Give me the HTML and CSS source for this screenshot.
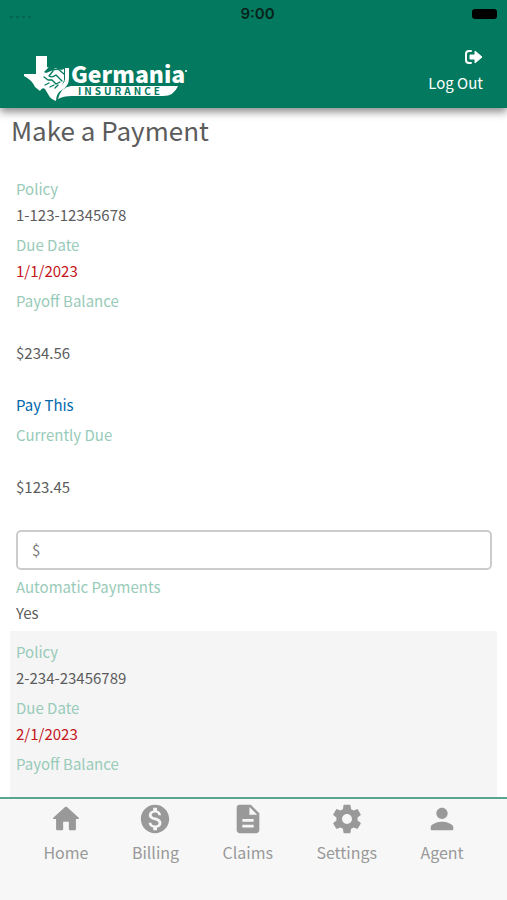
FILE: index.html
```html
<!DOCTYPE html>
<html lang="en">
<head>
  <meta charset="UTF-8">
  <meta name="viewport" content="width=device-width, initial-scale=1">
  <title>Make a Payment</title>
  <link rel="stylesheet" href="styles.css">
</head>
<body>

  <header class="header">
    <div class="status-bar">
      <span class="signal"><i></i><i></i><i></i><i></i></span>
      <span class="time">9:00</span>
      <span class="battery"></span>
    </div>
    <div class="header-row">
      <svg class="logo" viewBox="0 0 164 48" role="img" aria-label="Germania Insurance">
        <!-- Texas -->
        <path fill="#fff" d="M12 0H23V11L27 13L32 12L37 14L40 13V24Q39 29 34 33Q30 38 32 45Q26 43 24 38L21 33Q18 31 16 35L11 31Q8 24 0 20V18H12Z"/>
        <!-- handshake -->
        <path fill="#037a5f" d="M20 16L24 12L31 12L27 15L22 17Z"/>
        <g fill="none" stroke="#037a5f" stroke-width="1.3" stroke-linecap="round" stroke-linejoin="round">
          <path d="M28 14L34 13L40 18"/>
          <path d="M29 15L25 20Q28 22 32 19L38 25"/>
          <path d="M20 21L24 24L28 24L32 28L36 26"/>
          <path d="M21 29L25 27M26 31L30 29M31 32L34 29"/>
        </g>
        <path fill="#fff" d="M41 12H45V22Q45 30 38 34Q32 37 32 45L29 40Q31 33 36 30Q42 27 41 20Z"/>
        <!-- banner -->
        <path fill="#fff" d="M34 43Q37 31 47 30H154Q150 40 139 40H48Q39 40 34 43Z"/>
        <text class="logo-name" x="47" y="27">Germania</text>
        <text class="logo-sub" x="54" y="39">INSURANCE</text>
        <circle cx="162" cy="15" r="1" fill="#fff"/>
      </svg>
      <button class="logout" type="button">
        <svg class="logout-icon" viewBox="0 0 18 14">
          <path d="M6 1H4Q1 1 1 4V10Q1 13 4 13H6" fill="none" stroke="#fff" stroke-width="2" stroke-linecap="round"/>
          <path d="M5 5H10V1L17 7L10 13V9H5Z" fill="#fff" stroke="#fff" stroke-width="1" stroke-linejoin="round"/>
        </svg>
        Log Out
      </button>
    </div>
  </header>

  <main class="content">
    <h1>Make a Payment</h1>

    <section class="policy">
      <dl>
        <dt>Policy</dt>
        <dd>1-123-12345678</dd>
        <dt>Due Date</dt>
        <dd class="due">1/1/2023</dd>
        <dt>Payoff Balance</dt>
        <dd class="amount">$234.56</dd>
        <dd><a href="#">Pay This</a></dd>
        <dt><label for="pay1">Currently Due</label></dt>
        <dd class="amount">$123.45</dd>
        <dd><input type="text" id="pay1" value="$"></dd>
        <dt>Automatic Payments</dt>
        <dd>Yes</dd>
      </dl>
    </section>

    <section class="policy shaded">
      <dl>
        <dt>Policy</dt>
        <dd>2-234-23456789</dd>
        <dt>Due Date</dt>
        <dd class="due">2/1/2023</dd>
        <dt>Payoff Balance</dt>
      </dl>
    </section>
  </main>

  <nav class="tabs">
    <a href="#">
      <svg viewBox="0 0 24 24"><path d="M10 19v-5h4v5c0 .55.45 1 1 1h3c.55 0 1-.45 1-1v-7h1.700c.46 0 .68-.57.33-.87L12.670 3.600c-.38-.34-.96-.34-1.340 0l-8.360 7.530c-.34.3-.13.87.33.87H5v7c0 .55.45 1 1 1h3c.55 0 1-.45 1-1z"/></svg>
      Home
    </a>
    <a href="#">
      <svg viewBox="0 0 24 24"><path d="M12 2C6.480 2 2 6.480 2 12s4.480 10 10 10 10-4.480 10-10S17.520 2 12 2zm1.410 16.090V20h-2.670v-1.930c-1.710-.36-3.160-1.460-3.270-3.400h1.960c.1 1.050.82 1.870 2.650 1.870 1.960 0 2.400-.98 2.400-1.590 0-.83-.44-1.610-2.670-2.140-2.480-.6-4.180-1.620-4.180-3.670 0-1.720 1.390-2.840 3.110-3.210V4h2.670v1.950c1.860.45 2.790 1.860 2.850 3.390H14.300c-.05-1.110-.64-1.870-2.220-1.870-1.500 0-2.400.68-2.400 1.640 0 .84.65 1.390 2.670 1.910s4.180 1.390 4.180 3.910c-.01 1.830-1.380 2.830-3.120 3.160z"/></svg>
      Billing
    </a>
    <a href="#">
      <svg viewBox="0 0 24 24"><path d="M14 2H6c-1.100 0-1.990.9-1.990 2L4 20c0 1.100.89 2 1.990 2H18c1.100 0 2-.9 2-2V8l-6-6zm2 16H8v-2h8v2zm0-4H8v-2h8v2zm-3-5V3.500L18.500 9H13z"/></svg>
      Claims
    </a>
    <a href="#">
      <svg viewBox="0 0 24 24"><path d="M19.430 12.980c.04-.32.07-.64.07-.98s-.03-.66-.07-.98l2.110-1.650c.19-.15.24-.42.12-.64l-2-3.460c-.12-.22-.39-.3-.61-.22l-2.490 1c-.52-.4-1.080-.73-1.690-.98l-.38-2.650C14.460 2.180 14.250 2 14 2h-4c-.25 0-.46.18-.49.42l-.38 2.650c-.61.25-1.170.59-1.690.98l-2.490-1c-.23-.09-.49 0-.61.22l-2 3.460c-.13.22-.07.49.12.64l2.110 1.650c-.04.32-.07.65-.07.98s.03.66.07.98l-2.110 1.650c-.19.15-.24.42-.12.64l2 3.460c.12.22.39.3.61.22l2.490-1c.52.4 1.080.73 1.690.98l.38 2.650c.03.24.24.42.49.42h4c.25 0 .46-.18.49-.42l.38-2.650c.61-.25 1.170-.59 1.690-.98l2.490 1c.23.09.49 0 .61-.22l2-3.460c.12-.22.07-.49-.12-.64l-2.110-1.650zM12 15.500c-1.930 0-3.500-1.570-3.500-3.500s1.570-3.500 3.500-3.500 3.500 1.570 3.500 3.500-1.570 3.500-3.500 3.500z"/></svg>
      Settings
    </a>
    <a href="#">
      <svg viewBox="0 0 24 24"><path d="M12 12c2.210 0 4-1.790 4-4s-1.790-4-4-4-4 1.790-4 4 1.790 4 4 4zm0 2c-2.670 0-8 1.340-8 4v1c0 .55.45 1 1 1h14c.55 0 1-.45 1-1v-1c0-2.660-5.330-4-8-4z"/></svg>
      Agent
    </a>
  </nav>

</body>
</html>
```
FILE: styles.css
```css
* {
  box-sizing: border-box;
}

body {
  margin: 0;
  height: 100vh;
  display: flex;
  flex-direction: column;
  font-family: "Noto Sans CJK SC", "Noto Sans", sans-serif;
  font-size: 15px;
  line-height: 26px;
  color: #5c5c5c;
  background-color: #fff;
}

/* header */
.header {
  flex: none;
  position: relative;
  background-color: #037a5f;
  color: #fff;
  box-shadow: 0 4px 8px rgba(0, 0, 0, 0.45);
}

.status-bar {
  display: grid;
  grid-template-columns: 1fr auto 1fr;
  align-items: center;
  height: 28px;
  padding: 0 10px;
  color: #06231b;
}

.signal {
  display: flex;
  gap: 3px;
  padding-top: 6px;
}

.signal i {
  width: 3px;
  height: 2px;
  background-color: #04664f;
}

.time {
  padding-left: 8px;
  font-family: Inter, sans-serif;
  font-size: 15px;
  font-weight: 600;
}

.battery {
  justify-self: end;
  width: 25px;
  height: 10px;
  border-radius: 3px;
  background-color: #000;
}

.header-row {
  display: flex;
  justify-content: space-between;
  align-items: flex-end;
  height: 80px;
  padding: 0 24px 4px;
}

.logo {
  width: 164px;
  height: 48px;
  overflow: visible;
}

.logo-name {
  font-size: 23px;
  font-weight: 900;
  fill: #fff;
}

.logo-sub {
  font-size: 10px;
  font-weight: 700;
  letter-spacing: 3px;
  fill: #037a5f;
}

.logout {
  display: flex;
  flex-direction: column;
  align-items: flex-end;
  gap: 6px;
  padding: 0 0 8px;
  border: none;
  background: none;
  color: #fff;
  font: inherit;
  cursor: pointer;
}

.logout-icon {
  width: 18px;
  height: 14px;
}

/* content */
.content {
  flex: 1;
  display: flex;
  flex-direction: column;
  overflow-y: auto;
  scrollbar-width: none;
  padding: 0 10px;
}

h1 {
  margin: 6px 1px 22px;
  font-size: 26px;
  font-weight: 400;
  line-height: 32px;
}

.policy {
  padding: 8px 5px 5px;
}

.shaded {
  flex: 1;
  background-color: #f5f5f5;
}

dl,
dd {
  margin: 0;
}

dt {
  color: #98cbb9;
}

dd + dt {
  margin-top: 4px;
}

dt,
dd {
  padding-left: 1px;
}

.due {
  color: #c4161c;
}

.amount {
  padding-top: 26px;
  padding-bottom: 26px;
}

.policy a {
  color: #0067ac;
  text-decoration: none;
}

.policy input {
  display: block;
  width: 100%;
  height: 40px;
  margin-top: 4px;
  padding: 0 14px 2px;
  border: 2px solid #ccc;
  border-radius: 5px;
  background-color: #fff;
  color: #777;
  font: inherit;
}

/* bottom tabs */
.tabs {
  flex: none;
  display: flex;
  justify-content: space-evenly;
  height: 103px;
  padding-top: 3px;
  border-top: 2px solid #5aa590;
  background-color: #f7f7f7;
}

.tabs a {
  display: flex;
  flex-direction: column;
  align-items: center;
  gap: 3px;
  color: #999;
  font-size: 16px;
  text-decoration: none;
}

.tabs svg {
  width: 34px;
  height: 34px;
  fill: #999;
}
```
